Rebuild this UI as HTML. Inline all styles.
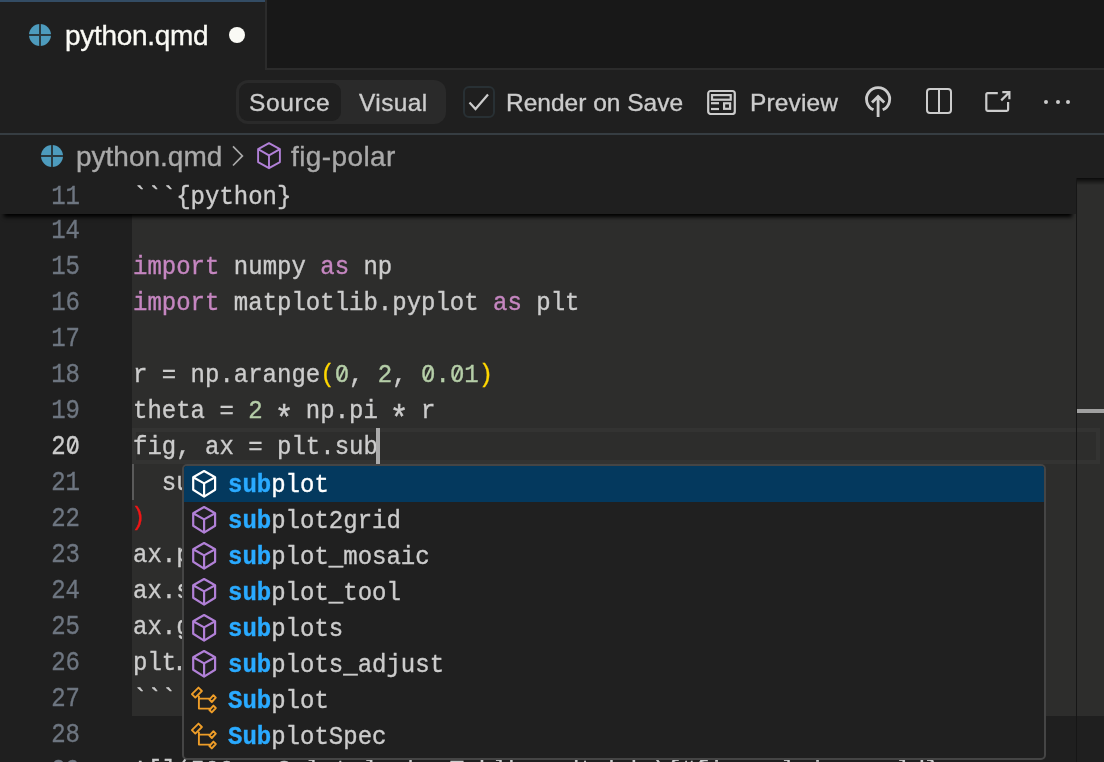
<!DOCTYPE html>
<html><head><meta charset="utf-8">
<style>
*{margin:0;padding:0;box-sizing:border-box}
html,body{width:1104px;height:762px;overflow:hidden;background:#1f1f1f}
body{position:relative;font-family:"Liberation Sans",sans-serif}
.abs{position:absolute}
#tabbar{left:0;top:0;width:1104px;height:70px;background:#181818}
#tabbar:after{content:"";position:absolute;left:0;right:0;bottom:0;height:2px;background:#2b2b2b}
#tab{left:0;top:0;width:265px;height:70px;background:#1f1f1f;z-index:2}
#tab .topb{left:0;top:0;width:265px;height:2px;background:#334c64}
#tab .rb{left:265px;top:0;width:2px;height:70px;background:#2b2b2b}
.ui{font-size:26px;white-space:pre;line-height:30px;will-change:transform;-webkit-text-stroke:0.35px currentColor}
#toolbar{left:0;top:70px;width:1104px;height:64px;background:#1f1f1f}
#toolbar .bb{left:0;top:63px;width:1104px;height:2px;background:#363d42}
.code{will-change:transform;-webkit-text-stroke:0.35px currentColor;font-family:"Liberation Mono",monospace;font-size:24px;white-space:pre;line-height:36px;color:#cccccc;transform:translateY(2px) scaleY(1.1);transform-origin:0 24px}
.ln{will-change:transform;-webkit-text-stroke:0.3px currentColor;left:0;width:80px;text-align:right;color:#6e7681;font-family:"Liberation Mono",monospace;font-size:24px;line-height:36px;white-space:pre;transform:translateY(2px) scaleY(1.15);transform-origin:0 24px}
.kw{color:#c586c0}
.z{position:relative;display:inline-block}
.z::before{content:"";position:absolute;left:4.5px;top:12.5px;width:5.4px;height:7px;background:var(--zb,#2d2d2c)}
.z::after{content:"";position:absolute;left:6.2px;top:9.5px;width:2.2px;height:13px;background:currentColor;transform:rotate(28deg)}
.ast{display:inline-block;transform:translateY(9px) scale(1.3)}
.num{color:#b5cea8}
.br{color:#ffd700}
.err{color:#f01616;position:relative;left:-2px;top:-1px}
</style></head><body>

<!-- tab bar -->
<div id="tabbar" class="abs"></div>
<div id="tab" class="abs">
  <div class="abs topb"></div>
  <div class="abs rb"></div>
  <svg class="abs" style="left:29px;top:24px" width="22" height="22" viewBox="0 0 22 22"><circle cx="11" cy="11" r="11" fill="#4d9bbd"/><rect x="10" y="0" width="2" height="22" fill="#2a3a40"/><rect x="0" y="10" width="22" height="2" fill="#2a3a40"/></svg>
  <div class="abs ui" style="left:65px;top:21px;color:#fafaf5;font-size:28px;letter-spacing:-0.3px">python.qmd</div>
  <div class="abs" style="left:229px;top:27px;width:16px;height:16px;border-radius:50%;background:#fafaf5"></div>
</div>

<!-- toolbar -->
<div id="toolbar" class="abs">
  <div class="abs bb"></div>
</div>
<div class="abs" style="left:236px;top:80px;width:210px;height:44px;border-radius:12px;background:#2a2a2a"></div>
<div class="abs" style="left:239px;top:83px;width:102px;height:38px;border-radius:9px;background:#1f1f1f"></div>
<div class="abs ui" style="left:249px;top:88px;color:#cccccc;font-size:24.5px;letter-spacing:0.6px">Source</div>
<div class="abs ui" style="left:359px;top:88px;color:#cccccc;font-size:24.5px;letter-spacing:0.4px">Visual</div>
<div class="abs" style="left:463px;top:86px;width:32px;height:32px;border-radius:6px;border:2px solid #283034;background:#1f1f1f"></div>
<svg class="abs" style="left:463px;top:86px" width="32" height="31" viewBox="0 0 32 31"><path d="M6.5 16.5 L12.5 23 L25 8.5" fill="none" stroke="#cccccc" stroke-width="2.2"/></svg>
<div class="abs ui" style="left:506px;top:88px;color:#cccccc;font-size:24.5px;letter-spacing:0px">Render on Save</div>
<svg class="abs" style="left:706px;top:89px" width="30" height="26" viewBox="0 0 30 26" fill="none" stroke="#cccccc" stroke-width="2.2">
  <rect x="2.2" y="2" width="26.6" height="23" rx="2.5"/>
  <rect x="6" y="6.1" width="18.7" height="4.6"/>
  <line x1="5" y1="14.2" x2="13" y2="14.2"/><line x1="5" y1="20" x2="13" y2="20"/>
  <rect x="18.1" y="14.3" width="6" height="5.5"/>
</svg>
<div class="abs ui" style="left:749.5px;top:88px;color:#cccccc;font-size:24.5px;letter-spacing:0.15px">Preview</div>
<svg class="abs" style="left:858px;top:82px" width="40" height="40" viewBox="0 0 40 40" fill="none" stroke="#cccccc" stroke-width="2.8">
  <path d="M15.5 27.8 A11.6 11.6 0 1 1 24.7 27.8"/>
  <path d="M20.1 35 V15.2 M14 20.6 L20.1 14.5 L26.2 20.6"/>
</svg>
<svg class="abs" style="left:925px;top:87px" width="28" height="28" viewBox="0 0 28 28" fill="none" stroke="#cccccc" stroke-width="2">
  <rect x="2" y="2" width="24" height="24" rx="3"/><line x1="14" y1="2" x2="14" y2="26"/>
</svg>
<svg class="abs" style="left:984px;top:89px" width="28" height="26" viewBox="0 0 28 26" fill="none" stroke="#cccccc" stroke-width="2.2">
  <path d="M13.8 4.1 H3.6 Q2.3 4.1 2.3 5.4 V20.5 Q2.3 21.8 3.6 21.8 H22.8 Q24.1 21.8 24.1 20.5 V13"/><path d="M18.3 3.2 H25.4 V10.3 M25.4 3.2 L17.2 11.4"/>
</svg>
<div class="abs" style="left:1044px;top:100px;width:4px;height:4px;border-radius:50%;background:#cccccc"></div>
<div class="abs" style="left:1056px;top:100px;width:4px;height:4px;border-radius:50%;background:#cccccc"></div>
<div class="abs" style="left:1066px;top:100px;width:4px;height:4px;border-radius:50%;background:#cccccc"></div>

<!-- breadcrumbs -->
<svg class="abs" style="left:41px;top:145px" width="22" height="22" viewBox="0 0 22 22"><circle cx="11" cy="11" r="11" fill="#4d9bbd"/><rect x="10" y="0" width="2" height="22" fill="#2a3a40"/><rect x="0" y="10" width="22" height="2" fill="#2a3a40"/></svg>
<div class="abs ui" style="left:76px;top:142px;color:#a9a9a9;font-size:28px">python.qmd</div>
<svg class="abs" style="left:230px;top:145px" width="16" height="22" viewBox="0 0 16 22" fill="none" stroke="#a9a9a9" stroke-width="1.7"><path d="M3 1.3 L12.4 10.9 L3 20.5"/></svg>
<svg class="abs" style="left:255px;top:141px" width="30" height="30" viewBox="0 0 30 30" fill="none" stroke="#b180d7" stroke-width="1.9" stroke-linejoin="round"><path d="M14 2.1 L24.9 8.2 V21.1 L14 27.2 L3.1 21.1 V8.2 Z M3.1 8.2 L14 14.3 L24.9 8.2 M14 14.3 V27.2"/></svg>
<div class="abs ui" style="left:291px;top:142px;color:#a9a9a9;font-size:28px;letter-spacing:0.4px">fig-polar</div>

<!-- editor -->
<div id="editor" class="abs" style="left:0;top:178px;width:1104px;height:584px;overflow:hidden;background:#1f1f1f">
<div class="abs" style="left:132px;top:-10px;width:972px;height:548px;background:#2d2d2c"></div>
<div class="abs" style="left:132px;top:250px;width:968px;height:36px;border:4px solid #333332"></div>
<div class="abs" style="left:132px;top:286px;width:2px;height:36px;background:#5a5a5a"></div>
<div class="abs ln" style="top:34px">14</div>
<div class="abs ln" style="top:70px">15</div>
<div class="abs code" style="left:133px;top:70px"><span class="kw">import</span> numpy <span class="kw">as</span> np</div>
<div class="abs ln" style="top:106px">16</div>
<div class="abs code" style="left:133px;top:106px"><span class="kw">import</span> matplotlib.pyplot <span class="kw">as</span> plt</div>
<div class="abs ln" style="top:142px">17</div>
<div class="abs ln" style="top:178px">18</div>
<div class="abs code" style="left:133px;top:178px">r = np.arange<span class="br">(</span><span class="num"><span class="z">0</span></span>, <span class="num">2</span>, <span class="num"><span class="z">0</span>.<span class="z">0</span>1</span><span class="br">)</span></div>
<div class="abs ln" style="top:214px">19</div>
<div class="abs code" style="left:133px;top:214px">theta = <span class="num">2</span> <span class="ast">*</span> np.pi <span class="ast">*</span> r</div>
<div class="abs ln" style="color:#cccccc;top:250px">2<span class="z" style="--zb:#1f1f1f">0</span></div>
<div class="abs code" style="left:133px;top:250px">fig, ax = plt.sub</div>
<div class="abs ln" style="top:286px">21</div>
<div class="abs code" style="left:133px;top:286px">  subplot_kw = {"projection": "polar"}</div>
<div class="abs ln" style="top:322px">22</div>
<div class="abs code" style="left:133px;top:322px"><span class="err">)</span></div>
<div class="abs ln" style="top:358px">23</div>
<div class="abs code" style="left:133px;top:358px">ax.plot(theta, r)</div>
<div class="abs ln" style="top:394px">24</div>
<div class="abs code" style="left:133px;top:394px">ax.set_rticks([0.5, 1, 1.5, 2])</div>
<div class="abs ln" style="top:430px">25</div>
<div class="abs code" style="left:133px;top:430px">ax.grid(True)</div>
<div class="abs ln" style="top:466px">26</div>
<div class="abs code" style="left:133px;top:466px">plt<span style="position:relative;left:-4px">.</span>show()</div>
<div class="abs ln" style="top:502px">27</div>
<div class="abs code" style="left:133px;top:502px">```</div>
<div class="abs ln" style="top:538px">28</div>
<div class="abs ln" style="top:574px">29</div>
<div class="abs code" style="left:133px;top:574px">![](500px-Solotel_ok_vTohlke_adtwbd.){#fig-ecl_iqse_pld}</div>
<div class="abs" style="left:376px;top:250px;width:4px;height:36px;background:#ababab"></div>
<div class="abs" style="left:0;top:0;width:1076px;height:36px;background:#1f1f1f;box-shadow:0 7px 4px -4px #000"></div>
<div class="abs ln" style="top:0">11</div>
<div class="abs code" style="left:133px;top:0">```{python}</div>
<div class="abs" style="left:1076px;top:0;width:1px;height:584px;background:#161616"></div>
<div class="abs" style="left:1077px;top:0;width:27px;height:7px;background:linear-gradient(rgba(0,0,0,0.75),rgba(0,0,0,0))"></div>
<div class="abs" style="left:1077px;top:231px;width:27px;height:4px;background:#a0a0a0"></div>
</div>

<div class="abs" style="left:182px;top:464px;width:864px;height:296px;border:2px solid #454545;border-radius:5px;background:#202020;overflow:hidden">
<div class="abs" style="left:0;top:0;width:860px;height:36px;background:#04395e"></div>
<svg class="abs" style="left:4px;top:0px" width="34" height="36" viewBox="0 0 34 36" fill="none" stroke="#ffffff" stroke-width="2.2" stroke-linejoin="round"><path d="M16.1 5 L27.1 11.2 V23.8 L16.1 30.6 L5.2 23.8 V11.2 Z M5.2 11.2 L16.1 17.4 L27.1 11.2 M16.1 17.4 V30.6"/></svg>
<div class="abs code" style="left:44px;top:0px;color:#ffffff"><b style="color:#2aaaff">sub</b>plot</div>
<svg class="abs" style="left:4px;top:36px" width="34" height="36" viewBox="0 0 34 36" fill="none" stroke="#b180d7" stroke-width="2.2" stroke-linejoin="round"><path d="M16.1 5 L27.1 11.2 V23.8 L16.1 30.6 L5.2 23.8 V11.2 Z M5.2 11.2 L16.1 17.4 L27.1 11.2 M16.1 17.4 V30.6"/></svg>
<div class="abs code" style="left:44px;top:36px;color:#cccccc"><b style="color:#2aaaff">sub</b>plot2grid</div>
<svg class="abs" style="left:4px;top:72px" width="34" height="36" viewBox="0 0 34 36" fill="none" stroke="#b180d7" stroke-width="2.2" stroke-linejoin="round"><path d="M16.1 5 L27.1 11.2 V23.8 L16.1 30.6 L5.2 23.8 V11.2 Z M5.2 11.2 L16.1 17.4 L27.1 11.2 M16.1 17.4 V30.6"/></svg>
<div class="abs code" style="left:44px;top:72px;color:#cccccc"><b style="color:#2aaaff">sub</b>plot_mosaic</div>
<svg class="abs" style="left:4px;top:108px" width="34" height="36" viewBox="0 0 34 36" fill="none" stroke="#b180d7" stroke-width="2.2" stroke-linejoin="round"><path d="M16.1 5 L27.1 11.2 V23.8 L16.1 30.6 L5.2 23.8 V11.2 Z M5.2 11.2 L16.1 17.4 L27.1 11.2 M16.1 17.4 V30.6"/></svg>
<div class="abs code" style="left:44px;top:108px;color:#cccccc"><b style="color:#2aaaff">sub</b>plot_tool</div>
<svg class="abs" style="left:4px;top:144px" width="34" height="36" viewBox="0 0 34 36" fill="none" stroke="#b180d7" stroke-width="2.2" stroke-linejoin="round"><path d="M16.1 5 L27.1 11.2 V23.8 L16.1 30.6 L5.2 23.8 V11.2 Z M5.2 11.2 L16.1 17.4 L27.1 11.2 M16.1 17.4 V30.6"/></svg>
<div class="abs code" style="left:44px;top:144px;color:#cccccc"><b style="color:#2aaaff">sub</b>plots</div>
<svg class="abs" style="left:4px;top:180px" width="34" height="36" viewBox="0 0 34 36" fill="none" stroke="#b180d7" stroke-width="2.2" stroke-linejoin="round"><path d="M16.1 5 L27.1 11.2 V23.8 L16.1 30.6 L5.2 23.8 V11.2 Z M5.2 11.2 L16.1 17.4 L27.1 11.2 M16.1 17.4 V30.6"/></svg>
<div class="abs code" style="left:44px;top:180px;color:#cccccc"><b style="color:#2aaaff">sub</b>plots_adjust</div>
<svg class="abs" style="left:4px;top:218px" width="34" height="36" viewBox="0 0 34 36" fill="none" stroke="#ee9d28" stroke-width="1.9" stroke-linejoin="round"><path d="M13.89 7.01 L10.49 3.61 L3.91 10.19 L7.31 13.59 Z M23.81 17.99 L21.41 15.59 L25.41 11.21 L27.81 13.61 Z M23.81 28.39 L21.41 25.99 L25.41 21.61 L27.81 24.01 Z M10.9 11.8 V24.6 H22.2 M10.9 14.6 H22.4"/></svg>
<div class="abs code" style="left:44px;top:216px;color:#cccccc"><b style="color:#2aaaff">Sub</b>plot</div>
<svg class="abs" style="left:4px;top:254px" width="34" height="36" viewBox="0 0 34 36" fill="none" stroke="#ee9d28" stroke-width="1.9" stroke-linejoin="round"><path d="M13.89 7.01 L10.49 3.61 L3.91 10.19 L7.31 13.59 Z M23.81 17.99 L21.41 15.59 L25.41 11.21 L27.81 13.61 Z M23.81 28.39 L21.41 25.99 L25.41 21.61 L27.81 24.01 Z M10.9 11.8 V24.6 H22.2 M10.9 14.6 H22.4"/></svg>
<div class="abs code" style="left:44px;top:252px;color:#cccccc"><b style="color:#2aaaff">Sub</b>plotSpec</div>
</div>
</body></html>
